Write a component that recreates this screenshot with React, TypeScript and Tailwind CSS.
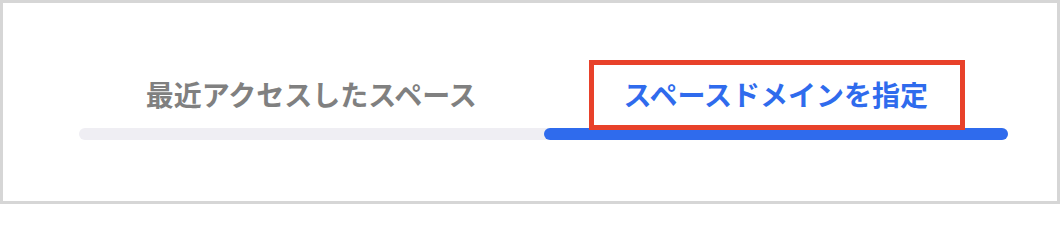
import React from 'react'

const tabs = [
  { label: '最近アクセスしたスペース', active: false },
  { label: 'スペースドメインを指定', active: true },
]

export default function App() {
  return (
    <div
      className="relative w-[1060px] h-[204px] border-[3px] border-[#d6d6d6] bg-white pl-[76px] pt-[73px]"
      style={{ fontFamily: '"Noto Sans CJK JP", "Noto Sans", sans-serif' }}
    >
      <div className="w-[929px]">
        {/* Tab labels */}
        <div className="flex">
          {tabs.map((t) => (
            <div
              key={t.label}
              className={
                t.active
                  ? 'flex-1 text-center text-[28px] leading-[36px] font-bold text-[#2f6bed]'
                  : 'flex-1 text-center text-[28px] leading-[36px] font-bold text-[#808080]'
              }
            >
              {t.label}
            </div>
          ))}
        </div>

        {/* Indicator */}
        <div className="mt-[16px] flex h-[12px] rounded-full bg-[#efeef3]">
          <div className="ml-auto w-1/2 rounded-full bg-[#2f6bed]" />
        </div>
      </div>

      {/* Annotation box */}
      <div className="absolute left-[586px] top-[57px] w-[376px] h-[70px] border-[5px] border-[#e8412a]" />
    </div>
  )
}
